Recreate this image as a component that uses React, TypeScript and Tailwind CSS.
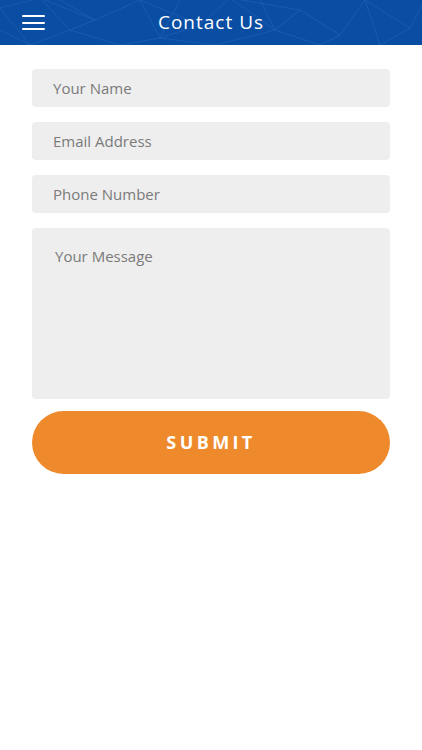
import React from 'react';

// Contact form screen

const fieldCls =
  'block w-full h-[38px] rounded-[4px] bg-[#eeeeee] px-[21px] text-[15px] text-[#555] placeholder:text-[#7a7a7a] outline-none';

function HeaderPattern() {
  return (
    <svg className="absolute inset-0 w-full h-full" viewBox="0 0 422 45" preserveAspectRatio="none">
      <g stroke="#3f7fd0" strokeOpacity="0.45" strokeWidth="0.6" fill="none">
        <path d="M0 8 L40 -2 L70 30 L30 45" />
        <path d="M40 -2 L95 20 L70 30 L120 45" />
        <path d="M95 20 L140 0 L160 38 L120 45" />
        <path d="M140 0 L200 25 L160 38 L215 45" />
        <path d="M200 25 L230 -2 L275 30 L215 45" />
        <path d="M230 -2 L300 10 L275 30 L320 45" />
        <path d="M300 10 L340 35 L365 0 L410 28 L380 45" />
        <path d="M340 35 L320 45 M410 28 L422 5 M0 30 L30 45" />
        <path d="M0 8 L30 45 M95 20 L60 0 M160 38 L180 0 M275 30 L260 0 M365 0 L380 45" />
      </g>
    </svg>
  );
}

export default function App() {
  return (
    <div className="min-h-[750px] bg-white" style={{ fontFamily: '"Open Sans", "Liberation Sans", sans-serif' }}>
      {/* Header */}
      <header className="relative h-[45px] bg-[#0a4ea4] overflow-hidden flex items-center justify-center">
        <HeaderPattern />
        <button className="absolute left-[22px] top-[15px] flex flex-col gap-[4.5px]">
          <span className="block w-[23px] h-[2px] bg-white rounded" />
          <span className="block w-[23px] h-[2px] bg-white rounded" />
          <span className="block w-[23px] h-[2px] bg-white rounded" />
        </button>
        <h1 className="relative text-white text-[19px] tracking-[1px] font-normal">Contact Us</h1>
      </header>

      {/* Form */}
      <form className="px-[32px] pt-[24px] flex flex-col gap-[15px]">
        <input className={fieldCls} placeholder="Your Name" />
        <input className={fieldCls} placeholder="Email Address" />
        <input className={fieldCls} placeholder="Phone Number" />
        <textarea
          className="block w-full h-[171px] rounded-[4px] bg-[#eeeeee] px-[23px] pt-[17px] text-[15px] text-[#555] placeholder:text-[#7a7a7a] outline-none resize-none"
          placeholder="Your Message"
        />
        <button
          type="button"
          className="-mt-[3px] h-[63px] w-full rounded-full bg-[#ee8a2c] text-white text-[18px] font-bold tracking-[3.4px]"
        >
          SUBMIT
        </button>
      </form>
    </div>
  );
}
